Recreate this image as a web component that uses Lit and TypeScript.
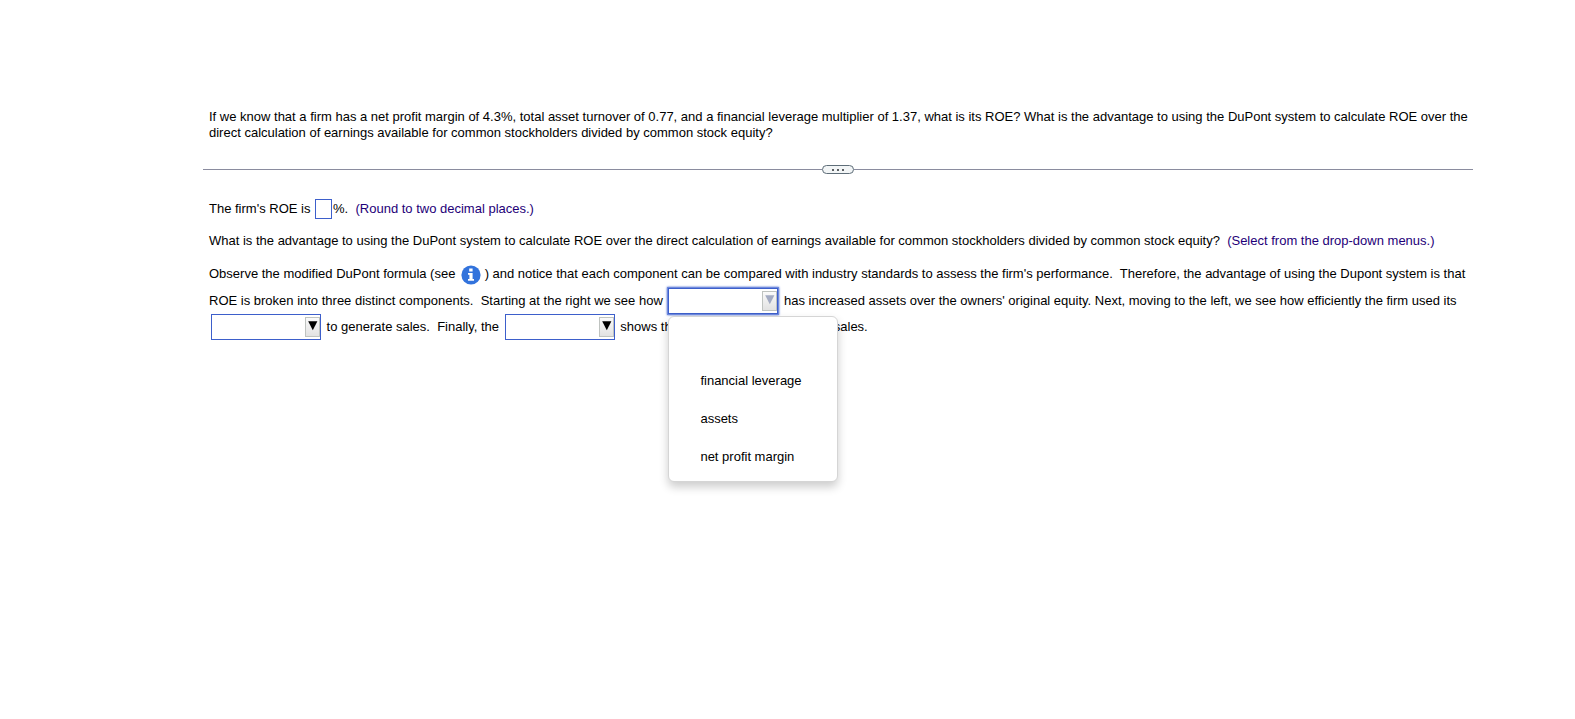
import { LitElement, html, css, nothing } from "lit";
import { customElement, property, state } from "lit/decorators.js";

const CHOICES = ["financial leverage", "assets", "net profit margin"];

@customElement("answer-select")
class AnswerSelect extends LitElement {
  @property() label = "";
  @property({ type: Boolean, reflect: true }) open = false;
  @state() private value = "";

  static styles = css`
    :host {
      display: inline-block;
      position: relative;
      margin: 0 2px;
      vertical-align: bottom;
      line-height: 16px;
    }
    .field {
      display: block;
      box-sizing: border-box;
      width: 110px;
      height: 26px;
      margin: 0;
      padding: 0 18px 0 4px;
      border: 1px solid #3d5fcb;
      border-radius: 0;
      background: #fff;
      color: #000;
      font: inherit;
      appearance: none;
      outline: none;
    }
    :host([open]) .field {
      box-shadow: 0 0 0 1px #6f8ade, 0 0 2px 1px #3d5fcb;
    }
    .arrow {
      position: absolute;
      top: 3px;
      right: 1px;
      box-sizing: border-box;
      width: 15px;
      height: 20px;
      border: 1px solid #bfc3c0;
      background: linear-gradient(#fafafa, #e2e2e2);
      pointer-events: none;
    }
    .arrow svg {
      display: block;
      width: 13px;
      height: 18px;
      fill: #000;
    }
    :host([open]) .arrow svg {
      fill: #a3abc2;
    }
    .menu {
      position: absolute;
      z-index: 1;
      top: 28px;
      left: 0;
      box-sizing: border-box;
      width: 170px;
      margin: 0;
      padding: 7px 0 5px;
      border: 1px solid #d5d5d5;
      border-radius: 6px;
      background: #fff;
      box-shadow: 0 5px 10px rgba(0, 0, 0, 0.2);
    }
    .option {
      display: block;
      box-sizing: border-box;
      width: 100%;
      height: 38px;
      padding: 0 31px;
      border: 0;
      background: none;
      color: #000;
      font: inherit;
      text-align: left;
      white-space: nowrap;
    }
    .option:hover {
      background: #eef2fc;
    }
  `;

  private choose(value: string) {
    this.value = value;
    this.open = false;
  }

  private toggle(e: Event) {
    e.preventDefault();
    this.open = !this.open;
  }

  render() {
    return html`<select
        class="field"
        aria-label=${this.label}
        @mousedown=${this.toggle}
        @change=${(e: Event) => this.choose((e.target as HTMLSelectElement).value)}
      >
        ${["", ...CHOICES].map((c) => html`<option value=${c} ?selected=${c === this.value}>${c}</option>`)}
      </select>
      <span class="arrow" aria-hidden="true">
        <svg viewBox="0 0 13 18"><path d="M2.2 3.2h9.2L6.8 12.2z" /></svg>
      </span>
      ${this.open
        ? html`<div class="menu" role="listbox" aria-label=${this.label}>
            ${["", ...CHOICES].map(
              (c) => html`<button
                class="option"
                type="button"
                role="option"
                aria-label=${c || "blank"}
                aria-selected=${c === this.value}
                @click=${() => this.choose(c)}
              >${c}</button>`
            )}
          </div>`
        : nothing}`;
  }
}

@customElement("app-root")
class AppRoot extends LitElement {
  static styles = css`
    :host {
      display: block;
      box-sizing: border-box;
      min-height: 100vh;
      padding: 109px 102px 108px 203px;
      background: #fff;
      color: #000;
      font: 13px/16px "Liberation Sans", Arial, sans-serif;
    }
    p {
      margin: 0;
    }
    .question {
      padding: 0 0 0 6px;
    }
    .divider {
      display: flex;
      align-items: center;
      margin: 24px 0 23px;
    }
    .rule {
      flex: 1;
      height: 1px;
      background: #8a8c9f;
    }
    .more {
      display: flex;
      align-items: center;
      justify-content: center;
      gap: 3px;
      box-sizing: border-box;
      width: 32px;
      height: 9px;
      padding: 0;
      border: 1px solid #5e6d78;
      border-radius: 5px;
      background: #f2f5f6;
    }
    .dot {
      width: 2px;
      height: 2px;
      background: #5b5f63;
    }
    .work {
      display: flex;
      flex-direction: column;
      gap: 10px;
      padding: 0 0 0 6px;
    }
    .answer {
      line-height: 24px;
    }
    .prompt {
      line-height: 20px;
    }
    .prose {
      line-height: 26px;
    }
    .value {
      box-sizing: border-box;
      width: 17px;
      height: 20px;
      margin: 0 1px;
      padding: 1px;
      border: 1px solid #3d5fcb;
      border-radius: 0;
      background: #fff;
      font: inherit;
      vertical-align: baseline;
    }
    .hint {
      color: #1e0078;
    }
    .info {
      display: inline-block;
      width: 20px;
      height: 20px;
      margin: 0 0 3px 2px;
      padding: 0;
      border: 0;
      background: none;
      vertical-align: -7px;
    }
    .info svg {
      display: block;
      width: 20px;
      height: 20px;
    }
  `;

  render() {
    return html`
      <p class="question">
        If we know that a firm has a net profit margin of 4.3%, total asset turnover of 0.77, and a financial leverage
        multiplier of 1.37, what is its ROE? What is the advantage to using the DuPont system to calculate ROE over the
        direct calculation of earnings available for common stockholders divided by common stock equity?
      </p>
      <div class="divider">
        <span class="rule"></span>
        <button class="more" type="button" aria-label="More">
          <span class="dot"></span><span class="dot"></span><span class="dot"></span>
        </button>
        <span class="rule"></span>
      </div>
      <div class="work">
        <p class="answer">
          <label for="roe">The firm's ROE is</label>
          <input id="roe" class="value" type="text" />%.&nbsp;
          <span class="hint">(Round to two decimal places.)</span>
        </p>
        <p class="prompt">
          What is the advantage to using the DuPont system to calculate ROE over the direct calculation of earnings
          available for common stockholders divided by common stock equity?&nbsp;
          <span class="hint">(Select from the drop-down menus.)</span>
        </p>
        <p class="prose">
          Observe the modified DuPont formula (see
          <button class="info" type="button" aria-label="Formula">
            <svg viewBox="0 0 20 20">
              <circle cx="10" cy="10" r="9.6" fill="#3273dc" />
              <path d="M8.2 3.6h3.4v2.8H8.2zM7 8h4.6v6H13v1.8H7V14h1.4V9.8H7z" fill="#fff" />
            </svg>
          </button>
          ) and notice that each component can be compared with industry standards to assess the firm's
          performance.&nbsp; Therefore, the advantage of using the Dupont system is that ROE is broken into three
          distinct components.&nbsp; Starting at the right we see how
          <answer-select label="First component" open></answer-select>
          has increased assets over the owners' original equity. Next, moving to the left, we see how efficiently the
          firm used its
          <answer-select label="Second component"></answer-select>
          to generate sales.&nbsp; Finally, the
          <answer-select label="Third component"></answer-select>
          shows the firm's profitability on all its sales.
        </p>
      </div>
    `;
  }
}
